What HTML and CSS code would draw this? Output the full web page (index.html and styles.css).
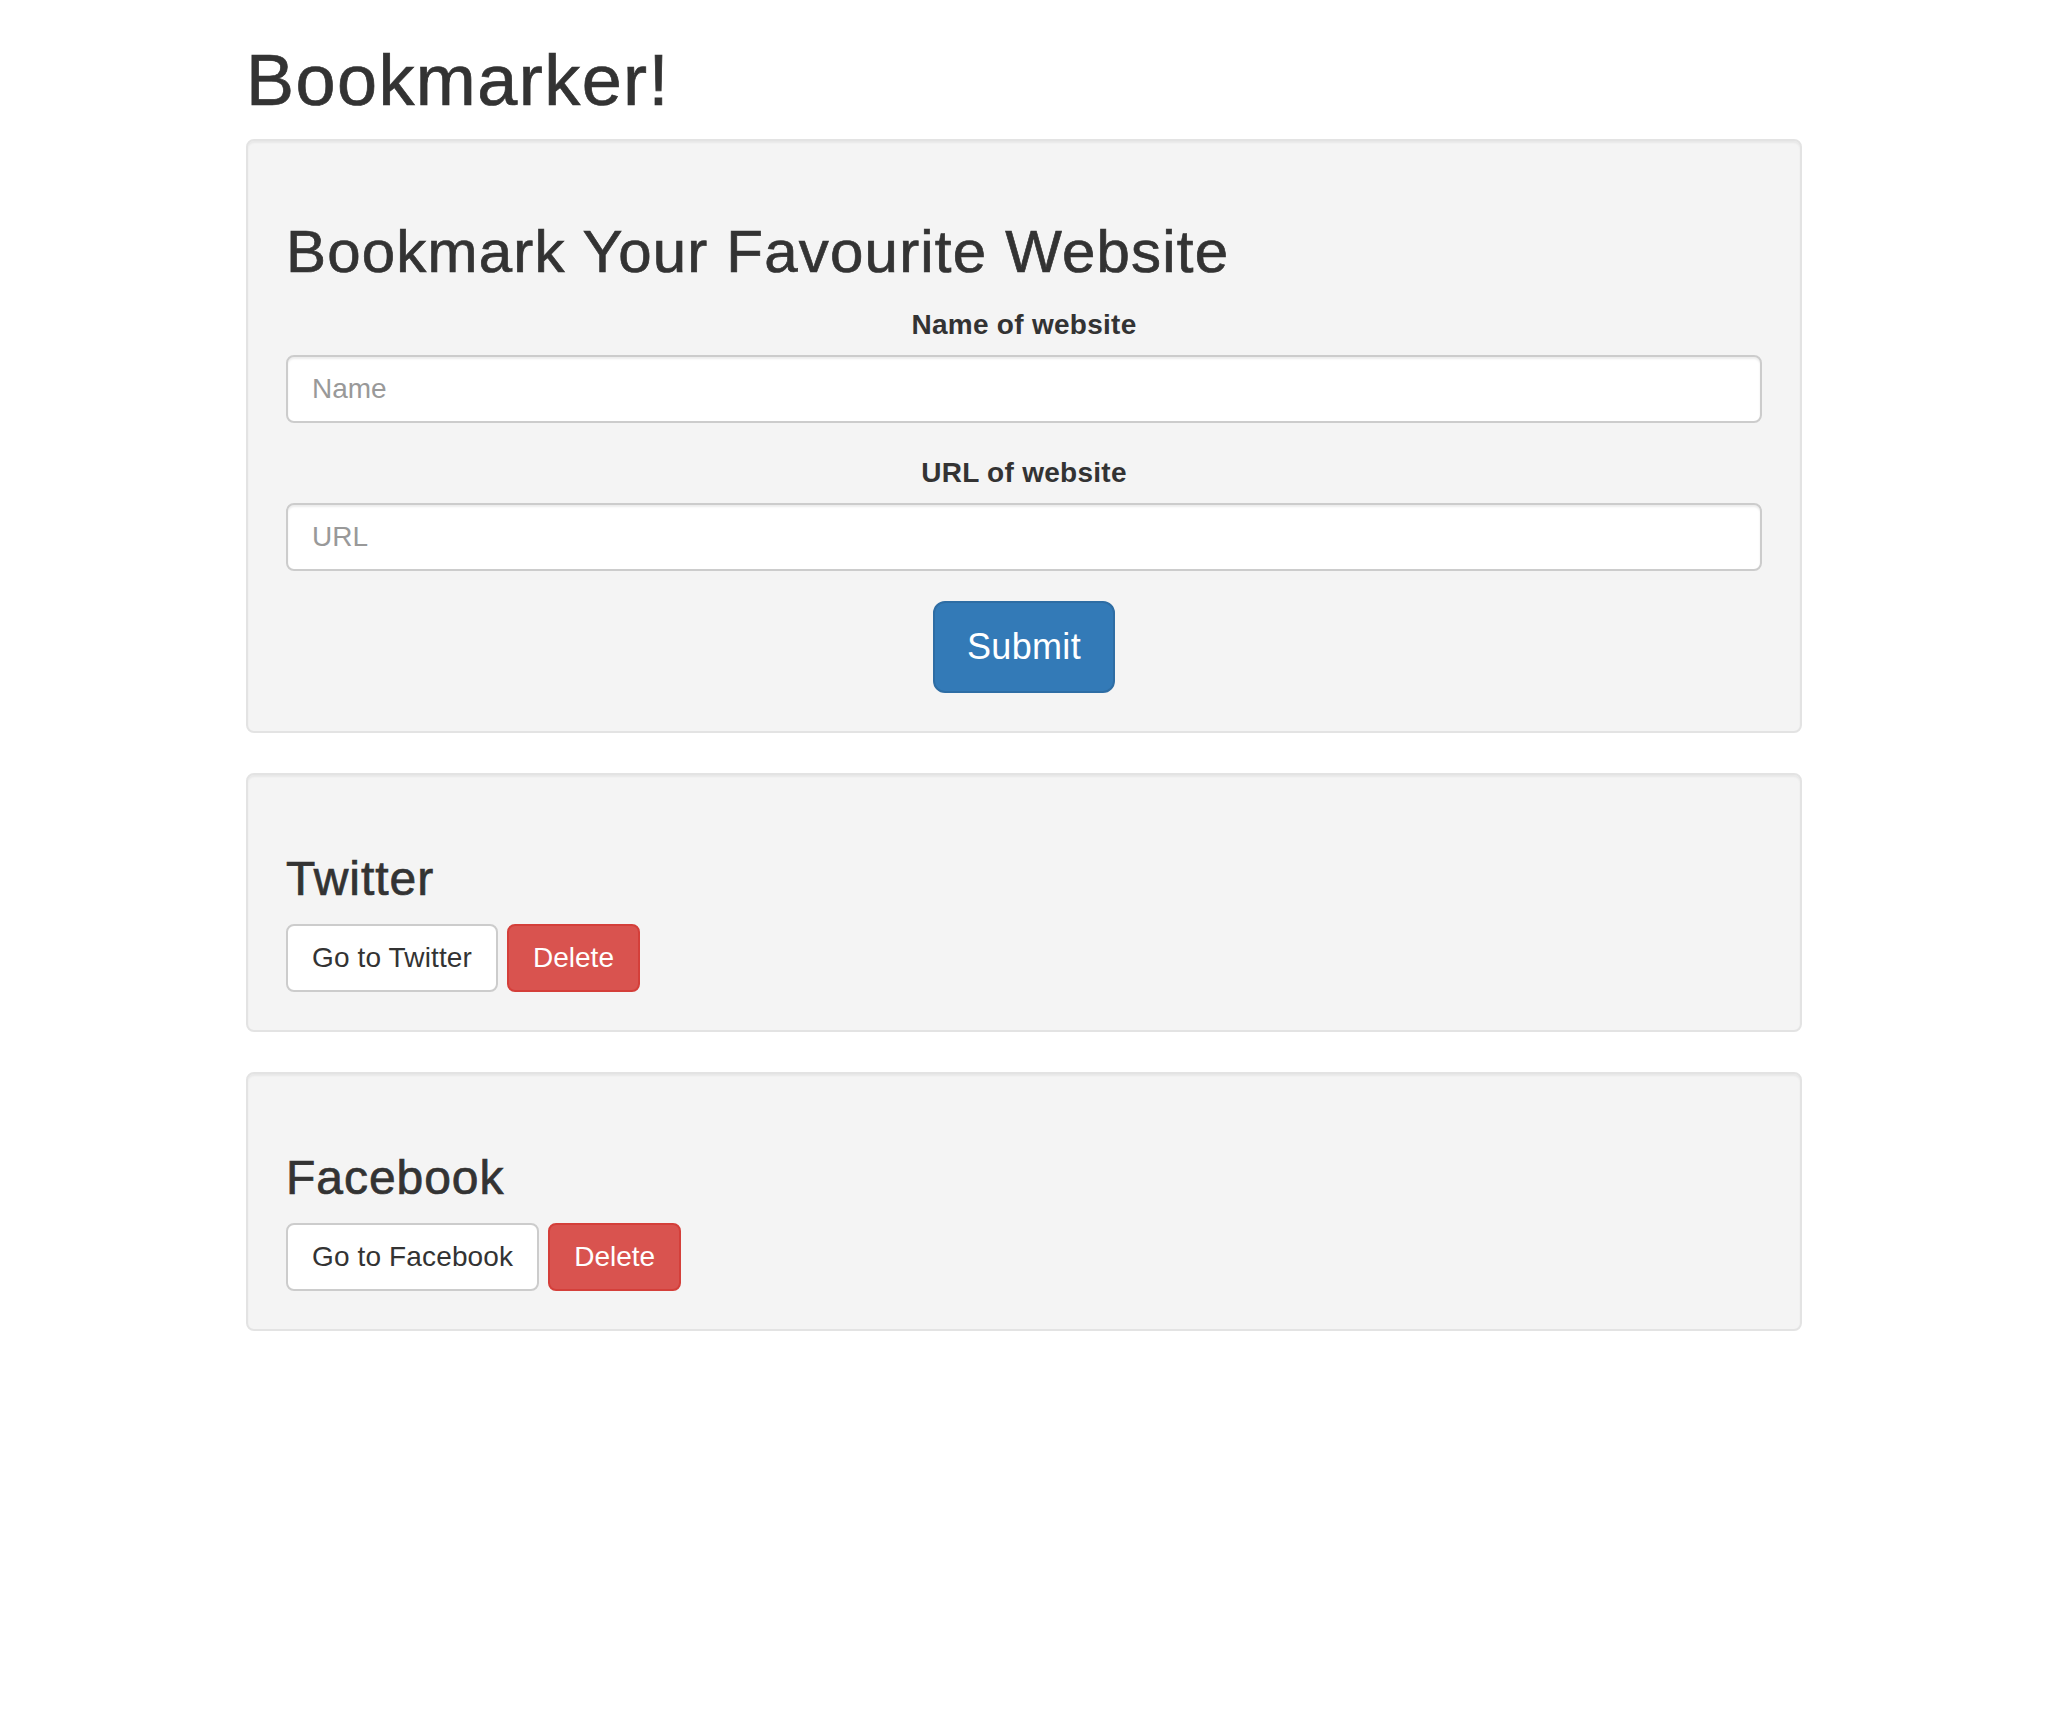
FILE: index.html
```html
<!DOCTYPE html>
<html lang="en">
<head>
<meta charset="utf-8">
<title>Bookmarker!</title>
<link rel="stylesheet" href="styles.css">
</head>
<body>
<div class="container">
  <h1 class="page-title">Bookmarker!</h1>

  <div class="well">
    <h2 class="well-heading">Bookmark Your Favourite Website</h2>
    <form class="bookmark-form">
      <div class="form-group">
        <label class="form-label" for="siteName">Name of website</label>
        <input class="form-control" id="siteName" type="text" placeholder="Name">
      </div>
      <div class="form-group">
        <label class="form-label" for="siteUrl">URL of website</label>
        <input class="form-control" id="siteUrl" type="text" placeholder="URL">
      </div>
      <button type="button" class="btn btn-primary btn-lg">Submit</button>
    </form>
  </div>

  <div class="bookmarks">
    <div class="well">
      <h3 class="bookmark-name">Twitter</h3>
      <div class="bookmark-actions">
        <a class="btn btn-default" href="#">Go to Twitter</a>
        <a class="btn btn-danger" href="#">Delete</a>
      </div>
    </div>
    <div class="well">
      <h3 class="bookmark-name">Facebook</h3>
      <div class="bookmark-actions">
        <a class="btn btn-default" href="#">Go to Facebook</a>
        <a class="btn btn-danger" href="#">Delete</a>
      </div>
    </div>
  </div>
</div>
</body>
</html>
```

FILE: styles.css
```css
* {
  box-sizing: border-box;
}

html, body {
  margin: 0;
  padding: 0;
  background: #ffffff;
}

body {
  font-family: "Liberation Sans", Arial, Helvetica, sans-serif;
  font-size: 28px;
  line-height: 40px;
  color: #333333;
}

.container {
  width: 1556px;
  margin: 0 auto;
}

.page-title,
.well-heading,
.bookmark-name {
  font-weight: 500;
  line-height: 1.1;
  letter-spacing: 0.02em;
  color: #333333;
  -webkit-text-stroke: 0.7px #333333;
}

.page-title {
  font-size: 72px;
  margin: 41px 0 19px 0;
}

.well {
  background: #f4f4f4;
  border: 2px solid #e3e3e3;
  border-radius: 8px;
  box-shadow: inset 0 2px 2px rgba(0, 0, 0, 0.05);
  padding: 38px;
  margin-bottom: 40px;
}

.well-heading {
  font-size: 60px;
  margin: 40px 0 20px 0;
}

.bookmark-form {
  text-align: center;
}

.form-group {
  margin-bottom: 30px;
}

.form-label {
  display: inline-block;
  font-weight: 700;
  font-size: 28px;
  line-height: 40px;
  letter-spacing: 0.01em;
  margin-bottom: 10px;
}

.form-control {
  display: block;
  width: 100%;
  height: 68px;
  padding: 12px 24px;
  font-family: inherit;
  font-size: 28px;
  line-height: 40px;
  color: #555555;
  background: #ffffff;
  border: 2px solid #cccccc;
  border-radius: 8px;
  box-shadow: inset 0 2px 2px rgba(0, 0, 0, 0.075);
  outline: none;
}

.form-control::placeholder {
  color: #999999;
  opacity: 1;
}

.btn {
  display: inline-block;
  padding: 12px 24px;
  font-family: inherit;
  font-size: 28px;
  font-weight: 400;
  line-height: 40px;
  text-align: center;
  text-decoration: none;
  white-space: nowrap;
  border: 2px solid transparent;
  border-radius: 8px;
  cursor: pointer;
}

.btn-lg {
  padding: 20px 32px;
  font-size: 36px;
  line-height: 48px;
  border-radius: 12px;
  letter-spacing: 0.01em;
}

.btn-primary {
  color: #ffffff;
  background: #337ab7;
  border-color: #2e6da4;
}

.btn-default {
  color: #333333;
  background: #ffffff;
  border-color: #cccccc;
  letter-spacing: 0.005em;
}

.btn-danger {
  color: #ffffff;
  background: #d9534f;
  border-color: #d43f3a;
}

.bookmark-name {
  font-size: 48px;
  margin: 40px 0 18px 0;
}

.bookmark-actions {
  display: flex;
  gap: 9px;
}
```
